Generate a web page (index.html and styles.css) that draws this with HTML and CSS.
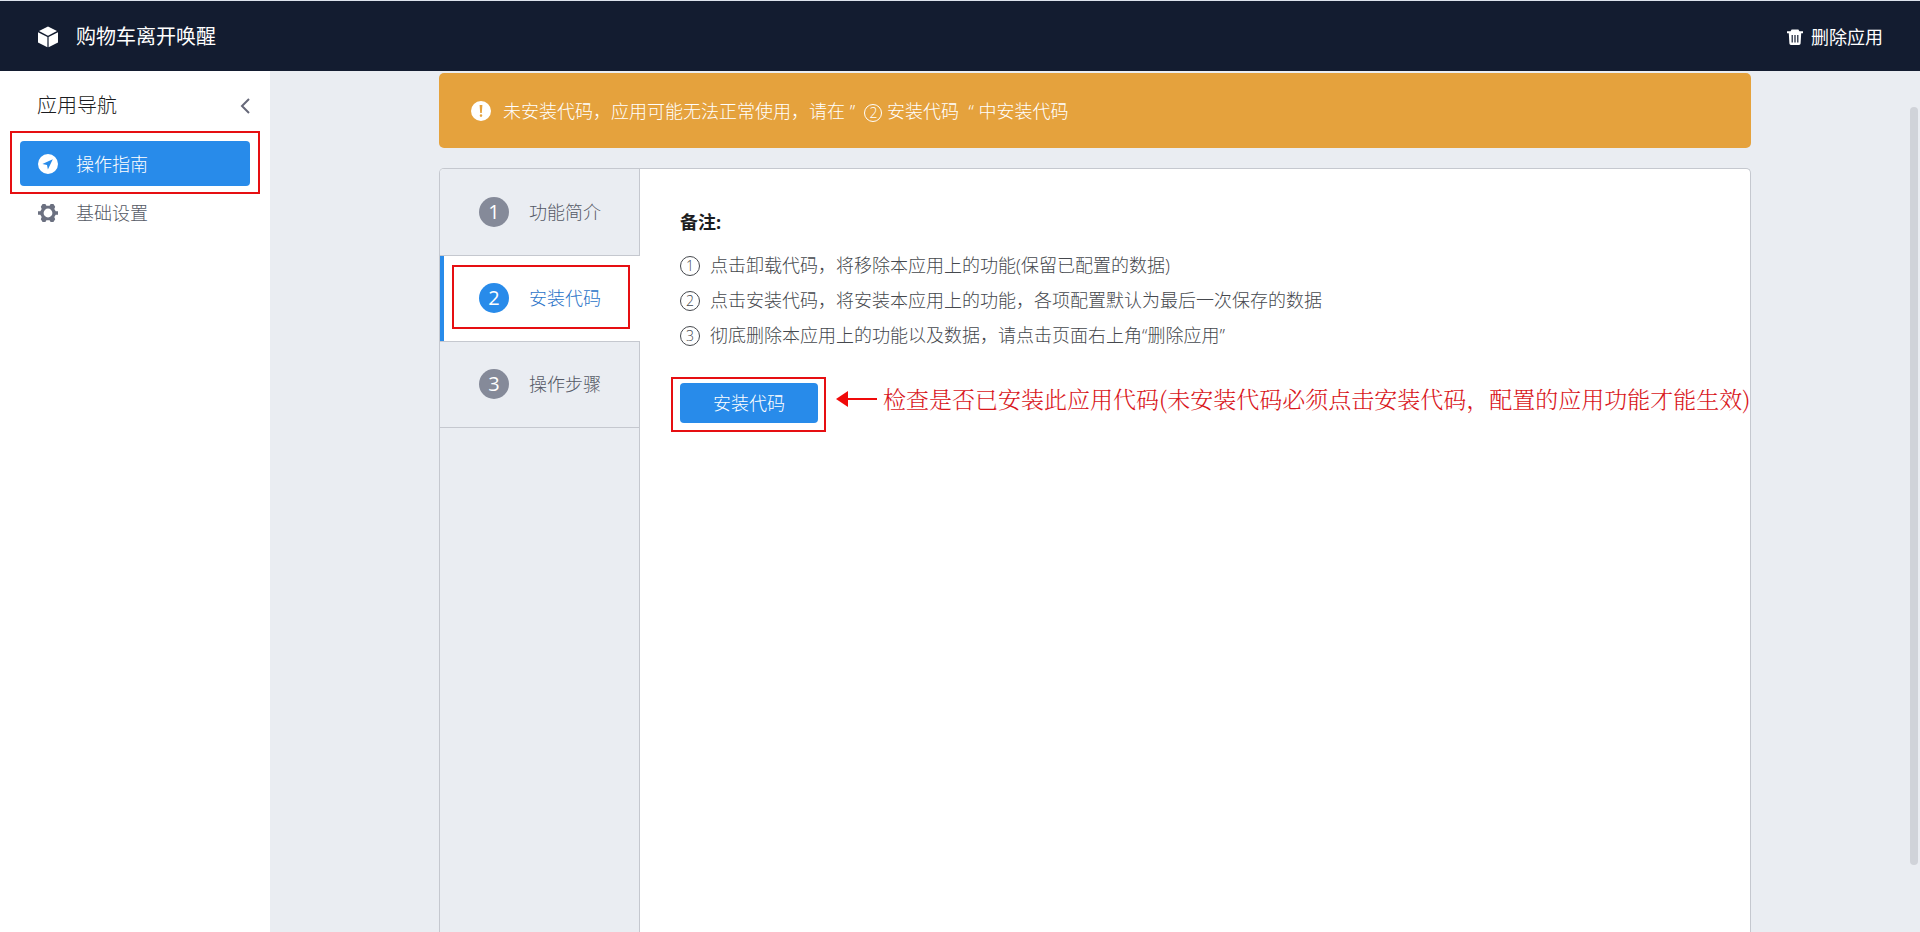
FILE: index.html
```html
<!DOCTYPE html>
<html lang="zh-CN">
<head>
<meta charset="utf-8">
<title>购物车离开唤醒</title>
<link rel="stylesheet" href="styles.css">
</head>
<body>
<header class="topbar">
  <h1 class="brand">
    <svg class="brand-icon" viewBox="0 0 20 22" aria-hidden="true">
      <path d="M10 0.5 19 5 10 9.8 1 5Z"/>
      <path d="M0 6.2 9.4 11.1V21.3L0 16.6Z"/>
      <path d="M20 6.2 10.6 11.1V21.3L20 16.6Z"/>
    </svg>
    <span>购物车离开唤醒</span>
  </h1>
  <button class="remove" type="button">
    <svg class="remove-icon" viewBox="0 0 16 16" aria-hidden="true">
      <path fill-rule="evenodd" d="M0 2.2H3.6L4.6 0.4H11.4L12.4 2.2H16V4.2H14.2L13.6 14.6Q13.5 16 12 16H4Q2.5 16 2.4 14.6L1.8 4.2H0ZM4.6 6V13.4H5.8V6ZM7.4 6V13.4H8.6V6ZM10.2 6V13.4H11.4V6Z"/>
    </svg>
    <span>删除应用</span>
  </button>
</header>
<div class="shell">
  <aside class="sidebar">
    <div class="sidebar-head">
      <h2 class="sidebar-title">应用导航</h2>
      <button class="collapse" type="button" aria-label="收起">
        <svg viewBox="0 0 10 16" aria-hidden="true"><path d="M9 1 2 8 9 15"/></svg>
      </button>
    </div>
    <nav class="nav">
      <a class="nav-item is-active" href="#guide">
        <svg class="nav-icon" viewBox="0 0 20 20" aria-hidden="true">
          <path fill-rule="evenodd" d="M10 0A10 10 0 1 1 10 20A10 10 0 1 1 10 0ZM14.8 5.2 4.4 10.1 9 11 9.9 15.6Z"/>
        </svg>
        <span>操作指南</span>
      </a>
      <a class="nav-item" href="#settings">
        <svg class="nav-icon" viewBox="0 0 20 20" aria-hidden="true">
          <path fill-rule="evenodd" d="M4.6 1H7.4L8.4 2.8H11.6L12.6 1H15.4L17.2 3.8 16.3 6 17.7 8.2H20V11.8H17.7L16.3 14 17.2 16.2 15.4 19H12.6L11.6 17.2H8.4L7.4 19H4.6L2.8 16.2 3.7 14 2.3 11.8H0V8.2H2.3L3.7 6 2.8 3.8ZM10 5.6A4.4 4.4 0 1 0 10 14.4A4.4 4.4 0 1 0 10 5.6Z"/>
        </svg>
        <span>基础设置</span>
      </a>
    </nav>
  </aside>
  <main class="main">
    <div class="content">
      <div class="alert" role="alert">
        <svg class="alert-icon" viewBox="0 0 20 20" aria-hidden="true">
          <path fill-rule="evenodd" d="M10 0A10 10 0 1 1 10 20A10 10 0 1 1 10 0ZM8.6 4 9.2 12H10.8L11.4 4ZM10 13.3A1.3 1.3 0 1 0 10 15.9A1.3 1.3 0 1 0 10 13.3Z"/>
        </svg>
        <p class="alert-text">未安装代码，应用可能无法正常使用，请在 ”&nbsp; <span class="ring ring-small">2</span> 安装代码&nbsp; “ 中安装代码</p>
      </div>
      <section class="card">
        <div class="tabs" role="tablist">
          <button class="tab" type="button" role="tab"><span class="num">1</span>功能简介</button>
          <button class="tab is-active" type="button" role="tab" aria-selected="true"><span class="num">2</span>安装代码</button>
          <button class="tab" type="button" role="tab"><span class="num">3</span>操作步骤</button>
        </div>
        <div class="panel" role="tabpanel">
          <h3 class="panel-title">备注:</h3>
          <ol class="notes">
            <li><span class="ring">1</span>点击卸载代码，将移除本应用上的功能(保留已配置的数据)</li>
            <li><span class="ring">2</span>点击安装代码，将安装本应用上的功能，各项配置默认为最后一次保存的数据</li>
            <li><span class="ring">3</span>彻底删除本应用上的功能以及数据，请点击页面右上角“删除应用”</li>
          </ol>
          <div class="action">
            <span class="install-wrap"><button class="install" type="button">安装代码</button></span>
            <div class="callout">
              <svg class="arrow" viewBox="0 0 42 16" aria-hidden="true">
                <path class="arrow-head" d="M0 8 12 0V16Z"/>
                <path class="arrow-line" d="M10 8H41"/>
              </svg>
              <span>检查是否已安装此应用代码(未安装代码必须点击安装代码，配置的应用功能才能生效)</span>
            </div>
          </div>
        </div>
      </section>
    </div>
    <div class="scroll-thumb"></div>
  </main>
</div>
</body>
</html>
```

FILE: styles.css
```css
* { box-sizing: border-box; }

body {
  margin: 0;
  height: 100vh;
  overflow: hidden;
  display: flex;
  flex-direction: column;
  font-family: "Open Sans", "Noto Sans CJK SC", sans-serif;
  font-size: 18px;
  font-weight: 300;
  line-height: 24px;
  color: #45484d;
  background: #eaedf2;
}

h1, h2, h3, p, ol { margin: 0; padding: 0; font-size: inherit; font-weight: inherit; }

button {
  border: 0;
  padding: 0;
  background: none;
  font: inherit;
  color: inherit;
  cursor: pointer;
}

svg { display: block; flex: none; }

.topbar {
  flex: none;
  height: 71px;
  padding: 2px 37px 0 38px;
  border-top: 1px solid #dde3ec;
  display: flex;
  align-items: center;
  justify-content: space-between;
  color: #fff;
  background: #131c30;
}

.brand { display: flex; align-items: center; gap: 18px; font-size: 20px; font-weight: 400; }
.brand-icon { width: 20px; height: 22px; fill: #fff; }
.remove { display: flex; align-items: center; gap: 8px; font-weight: 400; }
.remove-icon { width: 16px; height: 16px; fill: #fff; }

.shell { flex: 1; min-height: 0; display: flex; }

.sidebar { flex: none; width: 270px; padding: 0 20px; background: #fff; }
.sidebar-head {
  height: 70px;
  padding-left: 17px;
  display: flex;
  align-items: center;
  justify-content: space-between;
}
.sidebar-title { font-size: 20px; color: #1b1c20; }
.collapse svg { width: 10px; height: 16px; fill: none; stroke: #666879; stroke-width: 2; }

.nav { display: flex; flex-direction: column; gap: 4px; }
.nav-item {
  position: relative;
  height: 45px;
  padding: 0 18px;
  display: flex;
  align-items: center;
  gap: 18px;
  border-radius: 4px;
  color: #555965;
  text-decoration: none;
}
.nav-icon { width: 20px; height: 20px; fill: #6b7080; }
.nav-item.is-active { color: #fff; background: #288bea; }
.nav-item.is-active .nav-icon { fill: #fff; }

.nav-item.is-active::after,
.tab.is-active::after,
.install-wrap::after {
  content: "";
  position: absolute;
  border: 2px solid #e60f12;
  pointer-events: none;
}
.nav-item.is-active::after { inset: -10px -10px -8px -10px; }

.main {
  position: relative;
  flex: 1;
  min-width: 0;
  padding: 2px 24px 0;
  display: flex;
  justify-content: center;
}
.content {
  width: 100%;
  max-width: 1312px;
  display: flex;
  flex-direction: column;
  gap: 20px;
}

.alert {
  flex: none;
  height: 75px;
  padding: 0 32px;
  display: flex;
  align-items: center;
  gap: 12px;
  border-radius: 5px;
  color: #fff;
  background: #e5a23d;
}
.alert-icon { width: 20px; height: 20px; fill: #fff; }

.card {
  flex: 1;
  display: flex;
  border: 1px solid #c5c8cf;
  border-bottom: 0;
  border-radius: 5px 5px 0 0;
  background: #fff;
}
.tabs {
  flex: none;
  width: 200px;
  padding-top: 1px;
  display: flex;
  flex-direction: column;
  border-radius: 4px 0 0 0;
  background: #eaedf2 linear-gradient(#c5c8cf, #c5c8cf) right / 1px 100% no-repeat;
}
.tab {
  position: relative;
  height: 86px;
  padding: 0 0 1px 39px;
  display: flex;
  align-items: center;
  gap: 20px;
  border-bottom: 1px solid #c5c8cf;
  color: #555965;
}
.tab.is-active { background: #fff; color: #2b74c8; }
.tab.is-active::before {
  content: "";
  position: absolute;
  inset: 0 auto 0 0;
  width: 4px;
  background: #288bea;
}
.tab.is-active::after { inset: 9px 10px 12px 12px; }
.num {
  width: 30px;
  height: 30px;
  border-radius: 50%;
  font-size: 20px;
  font-weight: 400;
  line-height: 30px;
  text-align: center;
  color: #fff;
  background: #858a99;
}
.tab.is-active .num { background: #288bea; }

.panel { flex: 1; min-width: 0; padding: 41px 40px; }
.panel-title { font-weight: 700; color: #1b1c20; }
.notes { margin-top: 14px; list-style: none; line-height: 35px; }
.notes li { display: flex; align-items: center; gap: 10px; white-space: nowrap; }
.ring {
  display: inline-block;
  flex: none;
  width: 20px;
  height: 20px;
  border: 1px solid currentColor;
  border-radius: 50%;
  font-size: 14px;
  line-height: 18px;
  text-align: center;
}
.ring-small { width: 18px; height: 18px; line-height: 16px; }

.action { margin-top: 30px; display: flex; align-items: center; gap: 18px; }
.install-wrap { position: relative; flex: none; }
.install {
  display: block;
  width: 138px;
  height: 40px;
  border-radius: 4px;
  color: #fff;
  background: #288bea;
}
.install-wrap::after { inset: -6px -8px -9px -9px; }
.callout {
  display: flex;
  align-items: center;
  gap: 5px;
  padding-bottom: 8px;
  font-family: "Noto Serif CJK SC", SimSun, "Noto Sans CJK SC", serif;
  font-size: 23px;
  white-space: nowrap;
  color: #d9161b;
}
.arrow { width: 42px; height: 16px; }
.arrow-head { fill: #f00a0a; }
.arrow-line { stroke: #f00a0a; stroke-width: 2; }

.scroll-thumb {
  position: absolute;
  top: 36px;
  right: 2px;
  bottom: 67px;
  width: 8px;
  border-radius: 4px;
  background: #d0d3d9;
}
```
